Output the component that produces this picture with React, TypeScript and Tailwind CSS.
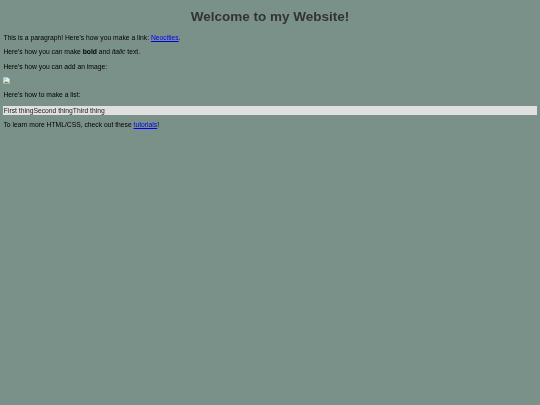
export default function App() {
  return (
    <div className="min-h-[405px] bg-[#7a9189] px-[3.375px] font-['Liberation_Sans',Arial,sans-serif] text-[6.75px] leading-[7.75px] text-black blur-[0.3px]">
      <h1 className="pt-[9px] pb-[9px] text-center text-[13.5px] leading-[15.5px] font-bold text-[#333333]">Welcome to my Website!</h1>
      <p className="mb-[6.75px]">
        This is a paragraph! Here's how you make a link: <a href="#" className="text-[#0000ee] underline">Neocities</a>.
      </p>
      <p className="mb-[6.75px]">
        Here's how you can make <strong className="font-bold">bold</strong> and <em className="italic">italic</em> text.
      </p>
      <p className="mb-[6.75px]">Here's how you can add an image:</p>
      <p className="mb-[6.75px]">
        <svg width="7" height="7" viewBox="0 0 16 16" className="block">
          <path d="M1 1h10l4 4v10H1z" fill="#e8eef0" stroke="#b8c0c4" />
          <path d="M2 14l4-5 3 3 2-2 3 4z" fill="#5f9a4a" />
          <path d="M3 3h5v4H3z" fill="#a9c8ee" />
        </svg>
      </p>
      <p className="mb-[7.5px]">Here's how to make a list:</p>
      <ul className="mb-[6.25px] flex bg-[#e0e0e0] px-[0.4px] py-[0.5px] text-[#222222]">
        <li>First thing</li>
        <li>Second thing</li>
        <li>Third thing</li>
      </ul>
      <p>
        To learn more HTML/CSS, check out these <a href="#" className="text-[#0000ee] underline">tutorials</a>!
      </p>
    </div>
  );
}
